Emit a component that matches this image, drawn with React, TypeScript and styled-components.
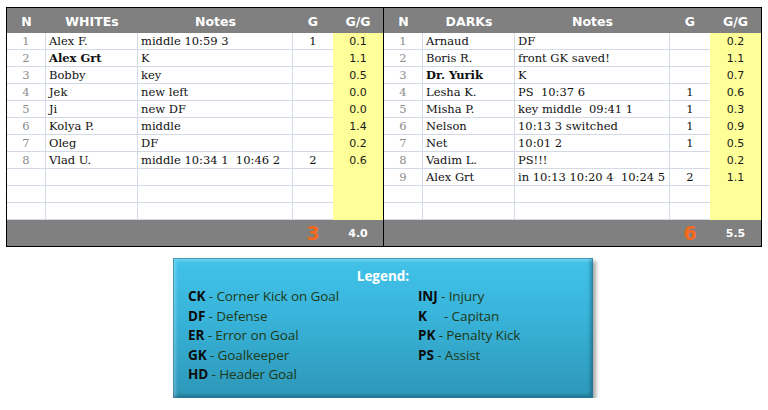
import React from "react";
import styled, { createGlobalStyle } from "styled-components";

const GlobalStyle = createGlobalStyle`
  html, body {
    margin: 0;
    background: #fff;
  }
`;

type Player = { n: number; name: string; note: string; g?: number; gg: string; cap?: boolean };

const whites: Player[] = [
  { n: 1, name: "Alex F.", note: "middle 10:59 3", g: 1, gg: "0.1" },
  { n: 2, name: "Alex Grt", note: "K", gg: "1.1", cap: true },
  { n: 3, name: "Bobby", note: "key", gg: "0.5" },
  { n: 4, name: "Jek", note: "new left", gg: "0.0" },
  { n: 5, name: "Ji", note: "new DF", gg: "0.0" },
  { n: 6, name: "Kolya P.", note: "middle", gg: "1.4" },
  { n: 7, name: "Oleg", note: "DF", gg: "0.2" },
  { n: 8, name: "Vlad U.", note: "middle 10:34 1  10:46 2", g: 2, gg: "0.6" },
];

const darks: Player[] = [
  { n: 1, name: "Arnaud", note: "DF", gg: "0.2" },
  { n: 2, name: "Boris R.", note: "front GK saved!", gg: "1.1" },
  { n: 3, name: "Dr. Yurik", note: "K", gg: "0.7", cap: true },
  { n: 4, name: "Lesha K.", note: "PS  10:37 6", g: 1, gg: "0.6" },
  { n: 5, name: "Misha P.", note: "key middle  09:41 1", g: 1, gg: "0.3" },
  { n: 6, name: "Nelson", note: "10:13 3 switched", g: 1, gg: "0.9" },
  { n: 7, name: "Net", note: "10:01 2", g: 1, gg: "0.5" },
  { n: 8, name: "Vadim L.", note: "PS!!!", gg: "0.2" },
  { n: 9, name: "Alex Grt", note: "in 10:13 10:20 4  10:24 5", g: 2, gg: "1.1" },
];

const legendLeft = [
  ["CK", "Corner Kick on Goal"],
  ["DF", "Defense"],
  ["ER", "Error on Goal"],
  ["GK", "Goalkeeper"],
  ["HD", "Header Goal"],
];

const legendRight = [
  ["INJ", "Injury"],
  ["K", "Capitan"],
  ["PK", "Penalty Kick"],
  ["PS", "Assist"],
];

const Page = styled.div`
  padding: 7px 0 0 6px;
  display: flex;
  flex-direction: column;
`;

const Sheet = styled.div`
  display: flex;
  width: max-content;
  border: 1px solid #000;
`;

const Half = styled.div<{ $cols: string; $divider?: boolean }>`
  display: grid;
  grid-template-columns: ${({ $cols }) => $cols};
  grid-template-rows: 25px repeat(11, 17px) 26px;
  border-right: ${({ $divider }) => ($divider ? "1px solid #000" : "none")};
`;

const Head = styled.div`
  background: #808080;
  color: #fff;
  font: bold 12.5px "DejaVu Sans", Verdana, sans-serif;
  display: flex;
  align-items: center;
  justify-content: center;
  padding-top: 1px;
`;

const Cell = styled.div<{ $align?: "left" | "center"; $grid?: boolean; $bold?: boolean; $muted?: boolean }>`
  box-sizing: border-box;
  display: flex;
  align-items: center;
  justify-content: ${({ $align }) => ($align === "center" ? "center" : "flex-start")};
  padding: 0 3px;
  font: ${({ $bold }) => ($bold ? "bold" : "normal")} 11.5px "DejaVu Serif", "Liberation Serif", serif;
  color: ${({ $muted }) => ($muted ? "#8c8c8c" : "#111")};
  white-space: pre;
  overflow: hidden;
  border-bottom: 1px solid #d3d9e5;
  border-right: ${({ $grid }) => ($grid ? "1px solid #d3d9e5" : "none")};
`;

const Rate = styled.div`
  background: #ffff99;
  display: flex;
  align-items: center;
  justify-content: center;
  font: 11px "DejaVu Sans", Tahoma, sans-serif;
  color: #1a1a1a;
`;

const Foot = styled.div`
  background: #808080;
  display: flex;
  align-items: center;
  justify-content: center;
`;

const Total = styled.span<{ $big?: boolean }>`
  font-family: "DejaVu Sans", Verdana, sans-serif;
  font-weight: bold;
  font-size: ${({ $big }) => ($big ? "19px" : "11px")};
  color: ${({ $big }) => ($big ? "#f56a1f" : "#fff")};
`;

const Legend = styled.div`
  align-self: flex-start;
  margin: 11px 0 0 167px;
  width: 420px;
  height: 140px;
  box-sizing: border-box;
  padding: 8px 15px 0;
  background: linear-gradient(180deg, #42c3ea 0%, #38b2d8 45%, #2d97b8 100%);
  box-shadow:
    inset 0 0 0 1px rgba(40, 120, 150, 0.6),
    inset 4px 4px 3px -1px rgba(255, 255, 255, 0.25),
    inset -4px -4px 3px -1px rgba(0, 40, 60, 0.3),
    3px 3px 4px rgba(0, 0, 0, 0.35);
  font: 13.5px "Open Sans", "Liberation Sans", sans-serif;
`;

const LegendTitle = styled.div`
  text-align: center;
  color: #fff;
  font-weight: bold;
  font-size: 13.5px;
  line-height: 21px;
`;

const LegendGrid = styled.div`
  display: grid;
  grid-template-columns: 230px 1fr;
`;

const LegendCol = styled.div`
  display: flex;
  flex-direction: column;
`;

const LegendItem = styled.div`
  line-height: 19.5px;
  color: #1e3a16;
  white-space: pre;
  letter-spacing: -0.1px;

  b {
    color: #0c0c0c;
  }
`;

const Team = ({ title, players, cols, goals, rate, divider }: {
  title: string;
  players: Player[];
  cols: string;
  goals: string;
  rate: string;
  divider?: boolean;
}) => {
  const rows = Array.from({ length: 11 }, (_, i) => players[i]);
  return (
    <Half $cols={cols} $divider={divider}>
      <Head>N</Head>
      <Head>{title}</Head>
      <Head>Notes</Head>
      <Head>G</Head>
      <Head>G/G</Head>
      {rows.map((p, i) => (
        <React.Fragment key={i}>
          <Cell $align="center" $grid $muted>{p ? p.n : ""}</Cell>
          <Cell $grid $bold={p?.cap}>{p ? p.name : ""}</Cell>
          <Cell $grid>{p ? p.note : ""}</Cell>
          <Cell $align="center">{p?.g ?? ""}</Cell>
          <Rate>{p ? p.gg : ""}</Rate>
        </React.Fragment>
      ))}
      <Foot />
      <Foot />
      <Foot />
      <Foot><Total $big>{goals}</Total></Foot>
      <Foot><Total>{rate}</Total></Foot>
    </Half>
  );
};

export default function App() {
  return (
    <Page>
      <GlobalStyle />
      <Sheet>
        <Team title="WHITEs" players={whites} cols="39px 92px 155px 40px 50px" goals="3" rate="4.0" divider />
        <Team title="DARKs" players={darks} cols="39px 92px 155px 40px 51px" goals="6" rate="5.5" />
      </Sheet>
      <Legend>
        <LegendTitle>Legend:</LegendTitle>
        <LegendGrid>
          <LegendCol>
            {legendLeft.map(([k, d]) => (
              <LegendItem key={k}><b>{k}</b> - {d}</LegendItem>
            ))}
          </LegendCol>
          <LegendCol>
            {legendRight.map(([k, d]) => (
              <LegendItem key={k}><b>{k}</b>{k === "K" ? "     " : " "}- {d}</LegendItem>
            ))}
          </LegendCol>
        </LegendGrid>
      </Legend>
    </Page>
  );
}
